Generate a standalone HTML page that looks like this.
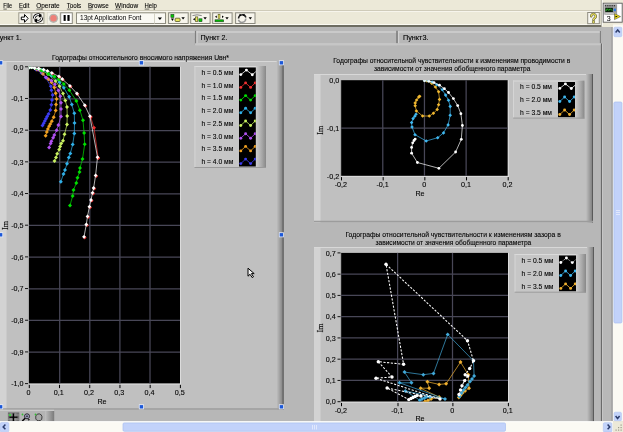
<!DOCTYPE html>
<html><head><meta charset="utf-8"><style>
html,body{margin:0;padding:0;width:623px;height:432px;overflow:hidden;background:#B7B7B7;}
svg{display:block;will-change:transform;font-family:"Liberation Sans",sans-serif;} text{stroke:#000;stroke-width:0.1px;}
</style></head><body>
<svg width="623" height="432" viewBox="0 0 623 432">
<defs>
<linearGradient id="rsh" x1="0" x2="1" y1="0" y2="0"><stop offset="0" stop-color="#C0C0C0"/><stop offset="0.7" stop-color="#8F8F8F"/><stop offset="1" stop-color="#7A7A7A"/></linearGradient>
<linearGradient id="lsh" x1="0" x2="1" y1="0" y2="0"><stop offset="0" stop-color="#CFCFCF"/><stop offset="0.6" stop-color="#A8A8A8"/><stop offset="1" stop-color="#888888"/></linearGradient>
<clipPath id="clipL"><rect x="28.9" y="66.8" width="151.1" height="316.8"/></clipPath>
<clipPath id="clipQ"><rect x="341.1" y="80.2" width="166.7" height="95.7"/></clipPath>
<clipPath id="clipB"><rect x="341.1" y="252.9" width="166.9" height="148.8"/></clipPath>
</defs>
<rect x="0" y="0" width="623" height="27" fill="#ECE9D8" />
<line x1="0" y1="10.5" x2="601" y2="10.5" stroke="#CFCBB9" stroke-width="1" />
<line x1="0" y1="11.5" x2="601" y2="11.5" stroke="#F7F5EC" stroke-width="1" />
<line x1="0" y1="24.5" x2="601.5" y2="24.5" stroke="#FBFAF2" stroke-width="1" />
<rect x="0" y="25" width="601.5" height="2" fill="#6E6D62" />
<text x="3.2" y="8.2" font-size="7.4" fill="#000" text-anchor="start" textLength="9.0" lengthAdjust="spacingAndGlyphs" >File</text>
<line x1="3.4000000000000004" y1="9.1" x2="6.800000000000001" y2="9.1" stroke="#000" stroke-width="0.55" />
<text x="19" y="8.2" font-size="7.4" fill="#000" text-anchor="start" textLength="10.3" lengthAdjust="spacingAndGlyphs" >Edit</text>
<line x1="19.2" y1="9.1" x2="23" y2="9.1" stroke="#000" stroke-width="0.55" />
<text x="36.2" y="8.2" font-size="7.4" fill="#000" text-anchor="start" textLength="23.5" lengthAdjust="spacingAndGlyphs" >Operate</text>
<line x1="36.400000000000006" y1="9.1" x2="41.400000000000006" y2="9.1" stroke="#000" stroke-width="0.55" />
<text x="66.7" y="8.2" font-size="7.4" fill="#000" text-anchor="start" textLength="14.5" lengthAdjust="spacingAndGlyphs" >Tools</text>
<line x1="66.9" y1="9.1" x2="70.9" y2="9.1" stroke="#000" stroke-width="0.55" />
<text x="87.9" y="8.2" font-size="7.4" fill="#000" text-anchor="start" textLength="20.7" lengthAdjust="spacingAndGlyphs" >Browse</text>
<line x1="88.10000000000001" y1="9.1" x2="92.5" y2="9.1" stroke="#000" stroke-width="0.55" />
<text x="115.1" y="8.2" font-size="7.4" fill="#000" text-anchor="start" textLength="23.0" lengthAdjust="spacingAndGlyphs" >Window</text>
<line x1="115.3" y1="9.1" x2="121.5" y2="9.1" stroke="#000" stroke-width="0.55" />
<text x="144.5" y="8.2" font-size="7.4" fill="#000" text-anchor="start" textLength="12.3" lengthAdjust="spacingAndGlyphs" >Help</text>
<line x1="144.7" y1="9.1" x2="149.3" y2="9.1" stroke="#000" stroke-width="0.55" />
<rect x="18.8" y="12.8" width="12.3" height="10.7" fill="#F6F4EC" stroke="#9D9B8C" stroke-width="1"/>
<rect x="31.9" y="12.8" width="12.0" height="10.7" fill="#F6F4EC" stroke="#9D9B8C" stroke-width="1"/>
<path d="M21.3,17.1 h3.2 v-2.6 l3.6,3.9 l-3.6,3.9 v-2.6 h-3.2 z" fill="#fff" stroke="#000" stroke-width="1"/>
<path d="M34.2,18.6 a3.9,3.9 0 0 1 6.6,-2.8" fill="none" stroke="#000" stroke-width="2.6"/>
<path d="M34.2,18.6 a3.9,3.9 0 0 1 6.6,-2.8" fill="none" stroke="#fff" stroke-width="1.1"/>
<path d="M41.9,17.4 a3.9,3.9 0 0 1 -6.6,2.8" fill="none" stroke="#000" stroke-width="2.6"/>
<path d="M41.9,17.4 a3.9,3.9 0 0 1 -6.6,2.8" fill="none" stroke="#fff" stroke-width="1.1"/>
<path d="M39.2,13.6 l3.2,2.6 l-3.6,1.2z M36.9,22.4 l-3.2,-2.6 l3.6,-1.2z" fill="#000"/>
<rect x="47.3" y="12.4" width="12.3" height="11.6" fill="#F3F1E7" stroke="#D8D6CA" stroke-width="0.6"/>
<circle cx="53.5" cy="18.3" r="4.6" fill="#B5B6B0"/>
<circle cx="53.5" cy="18.3" r="3.2" fill="#EE8078"/>
<rect x="60.7" y="12.8" width="11.599999999999994" height="10.7" fill="#FFFFFF" stroke="#8A897E" stroke-width="1"/>
<rect x="63.6" y="15" width="2.1" height="5.9" fill="#000" />
<rect x="67.4" y="15" width="2.2" height="5.9" fill="#000" />
<rect x="76.5" y="12.8" width="89" height="10.7" fill="#FAF9F3" stroke="#8F8D80" stroke-width="1"/>
<line x1="154.5" y1="13" x2="154.5" y2="23.5" stroke="#D5D3C5" stroke-width="1" />
<text x="80" y="20.2" font-size="7.0" fill="#000" text-anchor="start" textLength="61.4" lengthAdjust="spacingAndGlyphs" style="stroke:none">13pt Application Font</text>
<path d="M157.8,17.6 h4.2 l-2.1,2.4 z" fill="#000"/>
<rect x="168.6" y="12.8" width="19.599999999999994" height="10.7" fill="#F7F5EC" stroke="#8A897E" stroke-width="1"/>
<path d="M181.4,17.2 h3.4 l-1.7,2.3 z" fill="#000"/>
<rect x="190.7" y="12.8" width="19.400000000000006" height="10.7" fill="#F7F5EC" stroke="#8A897E" stroke-width="1"/>
<path d="M203.4,17.2 h3.4 l-1.7,2.3 z" fill="#000"/>
<rect x="212.7" y="12.8" width="19.400000000000006" height="10.7" fill="#F7F5EC" stroke="#8A897E" stroke-width="1"/>
<path d="M225.3,17.2 h3.4 l-1.7,2.3 z" fill="#000"/>
<rect x="235.6" y="12.8" width="19.400000000000006" height="10.7" fill="#F7F5EC" stroke="#8A897E" stroke-width="1"/>
<path d="M248.6,17.2 h3.4 l-1.7,2.3 z" fill="#000"/>
<rect x="170.9" y="14.4" width="3" height="3" fill="#00D000" stroke="#204020" stroke-width="0.6"/>
<path d="M170.9,18.6 h3.1 l-1.55,2.4z" fill="#000"/>
<rect x="175.1" y="18.2" width="5" height="3.3" fill="#E8E860" stroke="#404010" stroke-width="0.7" rx="0.8"/>
<path d="M192.5,15.6 q4.6,-1.6 9.2,0" fill="none" stroke="#777" stroke-width="0.9"/>
<path d="M192.9,19.3 l2,-1.3 v2.6z" fill="#000"/>
<rect x="195.5" y="16.9" width="2.3" height="4.6" fill="#E8E860" stroke="#404010" stroke-width="0.6"/>
<rect x="198.9" y="18.8" width="3.1" height="2.9" fill="#00D000" stroke="#204020" stroke-width="0.6"/>
<rect x="215" y="19.8" width="8.6" height="2" fill="#00C000" stroke="#204020" stroke-width="0.6"/>
<rect x="218.1" y="14.2" width="1.9" height="4.4" fill="#E8E860" stroke="#404010" stroke-width="0.5"/>
<path d="M215,16.8 l1.8,-1.3 v2.6z M223.8,16.8 l-1.8,-1.3 v2.6z" fill="#000"/>
<path d="M238.5,18.6 a3.8,3.8 0 0 1 7.4,-1.2" fill="none" stroke="#222" stroke-width="1.5"/>
<path d="M245.8,18.6 a3.8,3.8 0 0 1 -7.4,1.2" fill="none" stroke="#9A9A9A" stroke-width="1.5"/>
<path d="M239.5,13.8 l2.2,1.2 l-2.2,1.4z M244.5,13.8 l-2.2,1.2 l2.2,1.4z" fill="#000"/>
<rect x="587.7" y="12.5" width="11.599999999999909" height="11.2" fill="#F8F7F0" stroke="#8F8D80" stroke-width="1"/>
<path d="M591.2,16.2 a2.3,2.2 0 1 1 3.6,1.8 q-1.3,0.8 -1.3,2" fill="none" stroke="#5A5830" stroke-width="2.4" stroke-linecap="round"/>
<path d="M591.2,16.2 a2.3,2.2 0 1 1 3.6,1.8 q-1.3,0.8 -1.3,2" fill="none" stroke="#F0E860" stroke-width="1.2" stroke-linecap="round"/>
<circle cx="593.5" cy="22" r="1.2" fill="#F0E860" stroke="#5A5830" stroke-width="0.6"/>
<line x1="601.3" y1="0" x2="601.3" y2="26" stroke="#8E8C7E" stroke-width="1" />
<line x1="602.2" y1="0" x2="602.2" y2="26" stroke="#FFFFFF" stroke-width="1" />
<rect x="603.2" y="3.2" width="19" height="19" fill="#FFFFFF" stroke="#5A5A5A" stroke-width="0.9"/>
<rect x="604.3" y="4.3" width="12.8" height="10.4" fill="#9C9C9C" />
<rect x="605.0" y="5.2" width="1.2" height="1.1" fill="#222" />
<rect x="607.2" y="5.2" width="1.2" height="1.1" fill="#222" />
<rect x="609.4" y="5.2" width="1.2" height="1.1" fill="#222" />
<rect x="611.6" y="5.2" width="1.2" height="1.1" fill="#222" />
<rect x="613.8" y="5.2" width="1.2" height="1.1" fill="#222" />
<rect x="605.3" y="7.8" width="7.6" height="4.2" fill="#0A200A" />
<path d="M605.8,11 l1.5,-2.2 l1.5,1.6 l1.5,-1.6 l1.8,1.8" fill="none" stroke="#30E030" stroke-width="0.8"/>
<rect x="613.7" y="8.6" width="2.2" height="2.6" fill="#2A78E0" />
<rect x="605.3" y="12.8" width="10.5" height="1.2" fill="#C8C8C8" />
<text x="608.8" y="20.8" font-size="7" fill="#222" text-anchor="middle" >3</text>
<path d="M614.5,13.6 l6,3 l-6,3z" fill="#F0E010" stroke="#333" stroke-width="0.5"/>
<path d="M615.5,15.8 l2.2,0.8 l-2.2,0.8z" fill="#000"/>
<rect x="0" y="27" width="613" height="394" fill="#B7B7B7" />
<line x1="0" y1="32" x2="195" y2="32" stroke="#CACACA" stroke-width="1.8" />
<text x="-5.5" y="39.9" font-size="6.9" fill="#000" text-anchor="start" textLength="27.2" lengthAdjust="spacingAndGlyphs" >Пункт 1.</text>
<line x1="195" y1="32" x2="397" y2="32" stroke="#CACACA" stroke-width="1.8" />
<line x1="195.6" y1="30.8" x2="195.6" y2="45" stroke="#7E7E7E" stroke-width="1.4" />
<line x1="197" y1="31" x2="197" y2="43.5" stroke="#D2D2D2" stroke-width="1.2" />
<line x1="196" y1="44.2" x2="397" y2="44.2" stroke="#C6C6C6" stroke-width="2" />
<text x="200.5" y="39.9" font-size="6.9" fill="#000" text-anchor="start" textLength="27.0" lengthAdjust="spacingAndGlyphs" >Пункт 2.</text>
<line x1="397" y1="32" x2="600" y2="32" stroke="#CACACA" stroke-width="1.8" />
<line x1="397" y1="30.8" x2="397" y2="43.5" stroke="#7E7E7E" stroke-width="1.6" />
<line x1="398.6" y1="31" x2="398.6" y2="43.5" stroke="#D2D2D2" stroke-width="1.2" />
<line x1="600.4" y1="31" x2="600.4" y2="43.5" stroke="#7A7A7A" stroke-width="1" />
<line x1="195" y1="44.2" x2="601" y2="44.2" stroke="#C6C6C6" stroke-width="2" />
<text x="403" y="39.9" font-size="6.9" fill="#000" text-anchor="start" textLength="25.5" lengthAdjust="spacingAndGlyphs" >Пункт3.</text>
<line x1="601.5" y1="43.5" x2="601.5" y2="421" stroke="#6A6A6A" stroke-width="1.2" />
<line x1="602.6" y1="43.5" x2="602.6" y2="421" stroke="#C8C8C8" stroke-width="1" />
<rect x="603" y="27" width="10" height="394" fill="#B8B8B8" />
<rect x="0" y="61" width="283.6" height="349" fill="#C0C0C0" />
<rect x="0" y="61" width="6.5" height="349" fill="#D3D3D3" />
<line x1="0" y1="61.5" x2="283.6" y2="61.5" stroke="#D8D8D8" stroke-width="1" />
<rect x="276.6" y="61" width="7" height="349" fill="url(#rsh)"/>
<line x1="283.1" y1="61" x2="283.1" y2="410" stroke="#5A5A5A" stroke-width="1" />
<line x1="0" y1="409" x2="283.6" y2="409" stroke="#9C9C9C" stroke-width="1.6" />
<text x="52" y="60.2" font-size="6.9" fill="#000" text-anchor="start" textLength="177" lengthAdjust="spacingAndGlyphs" >Годографы относительного вносимого напряжения Uвн*</text>
<rect x="28.9" y="66.8" width="151.1" height="316.8" fill="#000" />
<line x1="180.5" y1="66.8" x2="180.5" y2="384.6" stroke="#DCDCDC" stroke-width="1" />
<line x1="28.9" y1="384.1" x2="181" y2="384.1" stroke="#DCDCDC" stroke-width="1" />
<line x1="28.4" y1="66.8" x2="28.4" y2="383.6" stroke="#A8A8A8" stroke-width="1" />
<line x1="59.7" y1="66.8" x2="59.7" y2="383.6" stroke="#484757" stroke-width="1.25" />
<line x1="89.80000000000001" y1="66.8" x2="89.80000000000001" y2="383.6" stroke="#484757" stroke-width="1.25" />
<line x1="119.9" y1="66.8" x2="119.9" y2="383.6" stroke="#484757" stroke-width="1.25" />
<line x1="150.0" y1="66.8" x2="150.0" y2="383.6" stroke="#484757" stroke-width="1.25" />
<line x1="28.9" y1="98.85" x2="180" y2="98.85" stroke="#484757" stroke-width="1.25" />
<line x1="28.9" y1="130.5" x2="180" y2="130.5" stroke="#484757" stroke-width="1.25" />
<line x1="28.9" y1="162.14999999999998" x2="180" y2="162.14999999999998" stroke="#484757" stroke-width="1.25" />
<line x1="28.9" y1="193.8" x2="180" y2="193.8" stroke="#484757" stroke-width="1.25" />
<line x1="28.9" y1="225.45" x2="180" y2="225.45" stroke="#484757" stroke-width="1.25" />
<line x1="28.9" y1="257.09999999999997" x2="180" y2="257.09999999999997" stroke="#484757" stroke-width="1.25" />
<line x1="28.9" y1="288.75" x2="180" y2="288.75" stroke="#484757" stroke-width="1.25" />
<line x1="28.9" y1="320.4" x2="180" y2="320.4" stroke="#484757" stroke-width="1.25" />
<line x1="28.9" y1="352.04999999999995" x2="180" y2="352.04999999999995" stroke="#484757" stroke-width="1.25" />
<line x1="25" y1="66.8" x2="28" y2="66.8" stroke="#000" stroke-width="0.9" />
<text x="23.6" y="69.5" font-size="7.2" fill="#000" text-anchor="end" >0,0</text>
<line x1="25" y1="98.47999999999999" x2="28" y2="98.47999999999999" stroke="#000" stroke-width="0.9" />
<text x="23.6" y="101.17999999999999" font-size="7.2" fill="#000" text-anchor="end" >-0,1</text>
<line x1="25" y1="130.16" x2="28" y2="130.16" stroke="#000" stroke-width="0.9" />
<text x="23.6" y="132.85999999999999" font-size="7.2" fill="#000" text-anchor="end" >-0,2</text>
<line x1="25" y1="161.84" x2="28" y2="161.84" stroke="#000" stroke-width="0.9" />
<text x="23.6" y="164.54" font-size="7.2" fill="#000" text-anchor="end" >-0,3</text>
<line x1="25" y1="193.51999999999998" x2="28" y2="193.51999999999998" stroke="#000" stroke-width="0.9" />
<text x="23.6" y="196.21999999999997" font-size="7.2" fill="#000" text-anchor="end" >-0,4</text>
<line x1="25" y1="225.2" x2="28" y2="225.2" stroke="#000" stroke-width="0.9" />
<text x="23.6" y="227.89999999999998" font-size="7.2" fill="#000" text-anchor="end" >-0,5</text>
<line x1="25" y1="256.88" x2="28" y2="256.88" stroke="#000" stroke-width="0.9" />
<text x="23.6" y="259.58" font-size="7.2" fill="#000" text-anchor="end" >-0,6</text>
<line x1="25" y1="288.56" x2="28" y2="288.56" stroke="#000" stroke-width="0.9" />
<text x="23.6" y="291.26" font-size="7.2" fill="#000" text-anchor="end" >-0,7</text>
<line x1="25" y1="320.24" x2="28" y2="320.24" stroke="#000" stroke-width="0.9" />
<text x="23.6" y="322.94" font-size="7.2" fill="#000" text-anchor="end" >-0,8</text>
<line x1="25" y1="351.92" x2="28" y2="351.92" stroke="#000" stroke-width="0.9" />
<text x="23.6" y="354.62" font-size="7.2" fill="#000" text-anchor="end" >-0,9</text>
<line x1="25" y1="383.6" x2="28" y2="383.6" stroke="#000" stroke-width="0.9" />
<text x="23.6" y="386.3" font-size="7.2" fill="#000" text-anchor="end" >-1,0</text>
<line x1="29.299999999999997" y1="384.8" x2="29.299999999999997" y2="388.1" stroke="#000" stroke-width="1" />
<text x="28.599999999999998" y="394.8" font-size="7.2" fill="#000" text-anchor="middle" >0</text>
<line x1="59.519999999999996" y1="384.8" x2="59.519999999999996" y2="388.1" stroke="#000" stroke-width="1" />
<text x="58.82" y="394.8" font-size="7.2" fill="#000" text-anchor="middle" >0,1</text>
<line x1="89.74000000000001" y1="384.8" x2="89.74000000000001" y2="388.1" stroke="#000" stroke-width="1" />
<text x="89.04" y="394.8" font-size="7.2" fill="#000" text-anchor="middle" >0,2</text>
<line x1="119.96000000000001" y1="384.8" x2="119.96000000000001" y2="388.1" stroke="#000" stroke-width="1" />
<text x="119.26" y="394.8" font-size="7.2" fill="#000" text-anchor="middle" >0,3</text>
<line x1="150.18" y1="384.8" x2="150.18" y2="388.1" stroke="#000" stroke-width="1" />
<text x="149.48" y="394.8" font-size="7.2" fill="#000" text-anchor="middle" >0,4</text>
<line x1="180.4" y1="384.8" x2="180.4" y2="388.1" stroke="#000" stroke-width="1" />
<text x="179.7" y="394.8" font-size="7.2" fill="#000" text-anchor="middle" >0,5</text>
<text x="102" y="403.8" font-size="7.2" fill="#000" text-anchor="middle" >Re</text>
<text x="0" y="0" font-size="8" text-anchor="middle" style="font-family:'Liberation Serif',serif;stroke-width:0.15px" transform="translate(8.2,225.6) rotate(-90)">Im</text>
<rect x="-1.9" y="60.3" width="5" height="5" fill="#E4EAF8" />
<rect x="-1.1" y="61.099999999999994" width="3.4" height="3.4" fill="#1C58D8" />
<rect x="138.9" y="60.3" width="5" height="5" fill="#E4EAF8" />
<rect x="139.70000000000002" y="61.099999999999994" width="3.4" height="3.4" fill="#1C58D8" />
<rect x="278.9" y="60.3" width="5" height="5" fill="#E4EAF8" />
<rect x="279.7" y="61.099999999999994" width="3.4" height="3.4" fill="#1C58D8" />
<rect x="-1.9" y="232.3" width="5" height="5" fill="#E4EAF8" />
<rect x="-1.1" y="233.10000000000002" width="3.4" height="3.4" fill="#1C58D8" />
<rect x="-1.9" y="404.3" width="5" height="5" fill="#E4EAF8" />
<rect x="-1.1" y="405.1" width="3.4" height="3.4" fill="#1C58D8" />
<rect x="138.9" y="404.3" width="5" height="5" fill="#E4EAF8" />
<rect x="139.70000000000002" y="405.1" width="3.4" height="3.4" fill="#1C58D8" />
<rect x="278.9" y="404.3" width="5" height="5" fill="#E4EAF8" />
<rect x="279.7" y="405.1" width="3.4" height="3.4" fill="#1C58D8" />
<rect x="278.9" y="232.3" width="5" height="5" fill="#E4EAF8" />
<rect x="279.7" y="233.10000000000002" width="3.4" height="3.4" fill="#1C58D8" />
<g clip-path="url(#clipL)">
<path d="M29.5,67.3 L36.0,69.5 L41.5,73.0 L45.6,77.6 L50.8,86.3 L51.4,90.3 L52.6,94.9 L52.0,100.0 L51.4,104.8 L50.3,110.0 L48.5,114.0 L47.1,116.4 L46.0,118.7 L44.8,121.0 L43.7,123.3 L42.5,125.6" fill="none" stroke="#3C3CF0" stroke-width="0.7"/>
<path d="M29.5,65.3 l2.0,2.0 l-2.0,2.0 l-2.0,-2.0z" fill="#3C3CF0"/>
<path d="M36.0,67.5 l2.0,2.0 l-2.0,2.0 l-2.0,-2.0z" fill="#3C3CF0"/>
<path d="M41.5,71.0 l2.0,2.0 l-2.0,2.0 l-2.0,-2.0z" fill="#3C3CF0"/>
<path d="M45.6,75.6 l2.0,2.0 l-2.0,2.0 l-2.0,-2.0z" fill="#3C3CF0"/>
<path d="M50.8,84.3 l2.0,2.0 l-2.0,2.0 l-2.0,-2.0z" fill="#3C3CF0"/>
<path d="M51.4,88.3 l2.0,2.0 l-2.0,2.0 l-2.0,-2.0z" fill="#3C3CF0"/>
<path d="M52.6,92.9 l2.0,2.0 l-2.0,2.0 l-2.0,-2.0z" fill="#3C3CF0"/>
<path d="M52.0,98.0 l2.0,2.0 l-2.0,2.0 l-2.0,-2.0z" fill="#3C3CF0"/>
<path d="M51.4,102.8 l2.0,2.0 l-2.0,2.0 l-2.0,-2.0z" fill="#3C3CF0"/>
<path d="M50.3,108.0 l2.0,2.0 l-2.0,2.0 l-2.0,-2.0z" fill="#3C3CF0"/>
<path d="M48.5,112.0 l2.0,2.0 l-2.0,2.0 l-2.0,-2.0z" fill="#3C3CF0"/>
<path d="M47.1,114.4 l2.0,2.0 l-2.0,2.0 l-2.0,-2.0z" fill="#3C3CF0"/>
<path d="M46.0,116.7 l2.0,2.0 l-2.0,2.0 l-2.0,-2.0z" fill="#3C3CF0"/>
<path d="M44.8,119.0 l2.0,2.0 l-2.0,2.0 l-2.0,-2.0z" fill="#3C3CF0"/>
<path d="M43.7,121.3 l2.0,2.0 l-2.0,2.0 l-2.0,-2.0z" fill="#3C3CF0"/>
<path d="M42.5,123.6 l2.0,2.0 l-2.0,2.0 l-2.0,-2.0z" fill="#3C3CF0"/>
<path d="M29.5,67.3 L37.0,69.5 L43.0,74.0 L48.5,79.3 L51.4,82.2 L54.3,87.4 L55.7,93.2 L56.6,99.0 L56.0,104.5 L55.7,110.5 L53.7,117.2 L51.8,121.3 L50.3,123.9 L49.1,126.2 L47.9,129.1 L46.8,132.0 L45.6,135.7" fill="none" stroke="#F0A020" stroke-width="0.7"/>
<path d="M29.5,65.3 l2.0,2.0 l-2.0,2.0 l-2.0,-2.0z" fill="#F0A020"/>
<path d="M37.0,67.5 l2.0,2.0 l-2.0,2.0 l-2.0,-2.0z" fill="#F0A020"/>
<path d="M43.0,72.0 l2.0,2.0 l-2.0,2.0 l-2.0,-2.0z" fill="#F0A020"/>
<path d="M48.5,77.3 l2.0,2.0 l-2.0,2.0 l-2.0,-2.0z" fill="#F0A020"/>
<path d="M51.4,80.2 l2.0,2.0 l-2.0,2.0 l-2.0,-2.0z" fill="#F0A020"/>
<path d="M54.3,85.4 l2.0,2.0 l-2.0,2.0 l-2.0,-2.0z" fill="#F0A020"/>
<path d="M55.7,91.2 l2.0,2.0 l-2.0,2.0 l-2.0,-2.0z" fill="#F0A020"/>
<path d="M56.6,97.0 l2.0,2.0 l-2.0,2.0 l-2.0,-2.0z" fill="#F0A020"/>
<path d="M56.0,102.5 l2.0,2.0 l-2.0,2.0 l-2.0,-2.0z" fill="#F0A020"/>
<path d="M55.7,108.5 l2.0,2.0 l-2.0,2.0 l-2.0,-2.0z" fill="#F0A020"/>
<path d="M53.7,115.2 l2.0,2.0 l-2.0,2.0 l-2.0,-2.0z" fill="#F0A020"/>
<path d="M51.8,119.3 l2.0,2.0 l-2.0,2.0 l-2.0,-2.0z" fill="#F0A020"/>
<path d="M50.3,121.9 l2.0,2.0 l-2.0,2.0 l-2.0,-2.0z" fill="#F0A020"/>
<path d="M49.1,124.2 l2.0,2.0 l-2.0,2.0 l-2.0,-2.0z" fill="#F0A020"/>
<path d="M47.9,127.1 l2.0,2.0 l-2.0,2.0 l-2.0,-2.0z" fill="#F0A020"/>
<path d="M46.8,130.0 l2.0,2.0 l-2.0,2.0 l-2.0,-2.0z" fill="#F0A020"/>
<path d="M45.6,133.7 l2.0,2.0 l-2.0,2.0 l-2.0,-2.0z" fill="#F0A020"/>
<path d="M29.5,67.3 L38.0,69.5 L46.2,77.6 L51.4,80.5 L54.9,84.3 L58.4,90.5 L60.3,96.3 L61.0,102.8 L61.0,109.0 L61.0,116.4 L58.4,125.0 L56.6,130.3 L54.3,134.9 L53.1,137.8 L51.4,141.2 L50.6,143.6 L49.1,147.6" fill="none" stroke="#B050F0" stroke-width="0.7"/>
<path d="M29.5,65.3 l2.0,2.0 l-2.0,2.0 l-2.0,-2.0z" fill="#B050F0"/>
<path d="M38.0,67.5 l2.0,2.0 l-2.0,2.0 l-2.0,-2.0z" fill="#B050F0"/>
<path d="M46.2,75.6 l2.0,2.0 l-2.0,2.0 l-2.0,-2.0z" fill="#B050F0"/>
<path d="M51.4,78.5 l2.0,2.0 l-2.0,2.0 l-2.0,-2.0z" fill="#B050F0"/>
<path d="M54.9,82.3 l2.0,2.0 l-2.0,2.0 l-2.0,-2.0z" fill="#B050F0"/>
<path d="M58.4,88.5 l2.0,2.0 l-2.0,2.0 l-2.0,-2.0z" fill="#B050F0"/>
<path d="M60.3,94.3 l2.0,2.0 l-2.0,2.0 l-2.0,-2.0z" fill="#B050F0"/>
<path d="M61.0,100.8 l2.0,2.0 l-2.0,2.0 l-2.0,-2.0z" fill="#B050F0"/>
<path d="M61.0,107.0 l2.0,2.0 l-2.0,2.0 l-2.0,-2.0z" fill="#B050F0"/>
<path d="M61.0,114.4 l2.0,2.0 l-2.0,2.0 l-2.0,-2.0z" fill="#B050F0"/>
<path d="M58.4,123.0 l2.0,2.0 l-2.0,2.0 l-2.0,-2.0z" fill="#B050F0"/>
<path d="M56.6,128.3 l2.0,2.0 l-2.0,2.0 l-2.0,-2.0z" fill="#B050F0"/>
<path d="M54.3,132.9 l2.0,2.0 l-2.0,2.0 l-2.0,-2.0z" fill="#B050F0"/>
<path d="M53.1,135.8 l2.0,2.0 l-2.0,2.0 l-2.0,-2.0z" fill="#B050F0"/>
<path d="M51.4,139.2 l2.0,2.0 l-2.0,2.0 l-2.0,-2.0z" fill="#B050F0"/>
<path d="M50.6,141.6 l2.0,2.0 l-2.0,2.0 l-2.0,-2.0z" fill="#B050F0"/>
<path d="M49.1,145.6 l2.0,2.0 l-2.0,2.0 l-2.0,-2.0z" fill="#B050F0"/>
<path d="M29.5,67.3 L40.0,69.5 L48.0,74.0 L55.5,81.0 L59.5,86.3 L63.0,93.5 L65.3,100.5 L67.0,107.0 L67.2,116.0 L67.0,124.5 L64.5,134.3 L63.0,140.7 L61.2,143.6 L60.1,146.5 L59.2,149.4 L57.2,153.8 L56.0,157.5 L54.5,161.0" fill="none" stroke="#C8F060" stroke-width="0.7"/>
<path d="M29.5,65.3 l2.0,2.0 l-2.0,2.0 l-2.0,-2.0z" fill="#C8F060"/>
<path d="M40.0,67.5 l2.0,2.0 l-2.0,2.0 l-2.0,-2.0z" fill="#C8F060"/>
<path d="M48.0,72.0 l2.0,2.0 l-2.0,2.0 l-2.0,-2.0z" fill="#C8F060"/>
<path d="M55.5,79.0 l2.0,2.0 l-2.0,2.0 l-2.0,-2.0z" fill="#C8F060"/>
<path d="M59.5,84.3 l2.0,2.0 l-2.0,2.0 l-2.0,-2.0z" fill="#C8F060"/>
<path d="M63.0,91.5 l2.0,2.0 l-2.0,2.0 l-2.0,-2.0z" fill="#C8F060"/>
<path d="M65.3,98.5 l2.0,2.0 l-2.0,2.0 l-2.0,-2.0z" fill="#C8F060"/>
<path d="M67.0,105.0 l2.0,2.0 l-2.0,2.0 l-2.0,-2.0z" fill="#C8F060"/>
<path d="M67.2,114.0 l2.0,2.0 l-2.0,2.0 l-2.0,-2.0z" fill="#C8F060"/>
<path d="M67.0,122.5 l2.0,2.0 l-2.0,2.0 l-2.0,-2.0z" fill="#C8F060"/>
<path d="M64.5,132.3 l2.0,2.0 l-2.0,2.0 l-2.0,-2.0z" fill="#C8F060"/>
<path d="M63.0,138.7 l2.0,2.0 l-2.0,2.0 l-2.0,-2.0z" fill="#C8F060"/>
<path d="M61.2,141.6 l2.0,2.0 l-2.0,2.0 l-2.0,-2.0z" fill="#C8F060"/>
<path d="M60.1,144.5 l2.0,2.0 l-2.0,2.0 l-2.0,-2.0z" fill="#C8F060"/>
<path d="M59.2,147.4 l2.0,2.0 l-2.0,2.0 l-2.0,-2.0z" fill="#C8F060"/>
<path d="M57.2,151.8 l2.0,2.0 l-2.0,2.0 l-2.0,-2.0z" fill="#C8F060"/>
<path d="M56.0,155.5 l2.0,2.0 l-2.0,2.0 l-2.0,-2.0z" fill="#C8F060"/>
<path d="M54.5,159.0 l2.0,2.0 l-2.0,2.0 l-2.0,-2.0z" fill="#C8F060"/>
<path d="M29.5,67.3 L42.0,70.0 L51.4,75.8 L59.5,82.2 L63.8,87.8 L69.1,96.7 L71.8,104.6 L74.3,113.3 L74.5,123.0 L74.3,133.6 L72.7,144.6 L70.3,153.4 L68.8,157.5 L67.0,163.8 L65.0,170.0 L63.5,174.0 L60.8,181.7" fill="none" stroke="#30B0E8" stroke-width="0.7"/>
<path d="M29.5,65.3 l2.0,2.0 l-2.0,2.0 l-2.0,-2.0z" fill="#30B0E8"/>
<path d="M42.0,68.0 l2.0,2.0 l-2.0,2.0 l-2.0,-2.0z" fill="#30B0E8"/>
<path d="M51.4,73.8 l2.0,2.0 l-2.0,2.0 l-2.0,-2.0z" fill="#30B0E8"/>
<path d="M59.5,80.2 l2.0,2.0 l-2.0,2.0 l-2.0,-2.0z" fill="#30B0E8"/>
<path d="M63.8,85.8 l2.0,2.0 l-2.0,2.0 l-2.0,-2.0z" fill="#30B0E8"/>
<path d="M69.1,94.7 l2.0,2.0 l-2.0,2.0 l-2.0,-2.0z" fill="#30B0E8"/>
<path d="M71.8,102.6 l2.0,2.0 l-2.0,2.0 l-2.0,-2.0z" fill="#30B0E8"/>
<path d="M74.3,111.3 l2.0,2.0 l-2.0,2.0 l-2.0,-2.0z" fill="#30B0E8"/>
<path d="M74.5,121.0 l2.0,2.0 l-2.0,2.0 l-2.0,-2.0z" fill="#30B0E8"/>
<path d="M74.3,131.6 l2.0,2.0 l-2.0,2.0 l-2.0,-2.0z" fill="#30B0E8"/>
<path d="M72.7,142.6 l2.0,2.0 l-2.0,2.0 l-2.0,-2.0z" fill="#30B0E8"/>
<path d="M70.3,151.4 l2.0,2.0 l-2.0,2.0 l-2.0,-2.0z" fill="#30B0E8"/>
<path d="M68.8,155.5 l2.0,2.0 l-2.0,2.0 l-2.0,-2.0z" fill="#30B0E8"/>
<path d="M67.0,161.8 l2.0,2.0 l-2.0,2.0 l-2.0,-2.0z" fill="#30B0E8"/>
<path d="M65.0,168.0 l2.0,2.0 l-2.0,2.0 l-2.0,-2.0z" fill="#30B0E8"/>
<path d="M63.5,172.0 l2.0,2.0 l-2.0,2.0 l-2.0,-2.0z" fill="#30B0E8"/>
<path d="M60.8,179.7 l2.0,2.0 l-2.0,2.0 l-2.0,-2.0z" fill="#30B0E8"/>
<path d="M29.5,67.3 L41.6,70.4 L48.5,73.9 L54.3,76.6 L58.9,79.5 L63.8,84.0 L69.4,90.3 L76.4,101.0 L79.9,110.2 L83.0,120.3 L84.1,133.0 L84.7,144.3 L82.5,159.0 L80.0,168.0 L79.5,172.0 L77.5,177.7 L76.3,183.0 L73.5,190.0 L72.6,196.0 L70.0,205.5" fill="none" stroke="#00E000" stroke-width="0.7"/>
<path d="M29.5,65.3 l2.0,2.0 l-2.0,2.0 l-2.0,-2.0z" fill="#00E000"/>
<path d="M41.6,68.4 l2.0,2.0 l-2.0,2.0 l-2.0,-2.0z" fill="#00E000"/>
<path d="M48.5,71.9 l2.0,2.0 l-2.0,2.0 l-2.0,-2.0z" fill="#00E000"/>
<path d="M54.3,74.6 l2.0,2.0 l-2.0,2.0 l-2.0,-2.0z" fill="#00E000"/>
<path d="M58.9,77.5 l2.0,2.0 l-2.0,2.0 l-2.0,-2.0z" fill="#00E000"/>
<path d="M63.8,82.0 l2.0,2.0 l-2.0,2.0 l-2.0,-2.0z" fill="#00E000"/>
<path d="M69.4,88.3 l2.0,2.0 l-2.0,2.0 l-2.0,-2.0z" fill="#00E000"/>
<path d="M76.4,99.0 l2.0,2.0 l-2.0,2.0 l-2.0,-2.0z" fill="#00E000"/>
<path d="M79.9,108.2 l2.0,2.0 l-2.0,2.0 l-2.0,-2.0z" fill="#00E000"/>
<path d="M83.0,118.3 l2.0,2.0 l-2.0,2.0 l-2.0,-2.0z" fill="#00E000"/>
<path d="M84.1,131.0 l2.0,2.0 l-2.0,2.0 l-2.0,-2.0z" fill="#00E000"/>
<path d="M84.7,142.3 l2.0,2.0 l-2.0,2.0 l-2.0,-2.0z" fill="#00E000"/>
<path d="M82.5,157.0 l2.0,2.0 l-2.0,2.0 l-2.0,-2.0z" fill="#00E000"/>
<path d="M80.0,166.0 l2.0,2.0 l-2.0,2.0 l-2.0,-2.0z" fill="#00E000"/>
<path d="M79.5,170.0 l2.0,2.0 l-2.0,2.0 l-2.0,-2.0z" fill="#00E000"/>
<path d="M77.5,175.7 l2.0,2.0 l-2.0,2.0 l-2.0,-2.0z" fill="#00E000"/>
<path d="M76.3,181.0 l2.0,2.0 l-2.0,2.0 l-2.0,-2.0z" fill="#00E000"/>
<path d="M73.5,188.0 l2.0,2.0 l-2.0,2.0 l-2.0,-2.0z" fill="#00E000"/>
<path d="M72.6,194.0 l2.0,2.0 l-2.0,2.0 l-2.0,-2.0z" fill="#00E000"/>
<path d="M70.0,203.5 l2.0,2.0 l-2.0,2.0 l-2.0,-2.0z" fill="#00E000"/>
<path d="M90.6,116.9 L94.0,127.8 L98.2,157.9" fill="none" stroke="#F03030" stroke-width="0.7"/>
<path d="M90.6,114.9 l2.0,2.0 l-2.0,2.0 l-2.0,-2.0z" fill="#F03030"/>
<path d="M94.0,125.8 l2.0,2.0 l-2.0,2.0 l-2.0,-2.0z" fill="#F03030"/>
<path d="M98.2,155.9 l2.0,2.0 l-2.0,2.0 l-2.0,-2.0z" fill="#F03030"/>
<path d="M52.5,71.7 l1.9,1.9 l-1.9,1.9 l-1.9,-1.9z" fill="#E83030"/>
<path d="M59.6,75.2 l1.9,1.9 l-1.9,1.9 l-1.9,-1.9z" fill="#E83030"/>
<path d="M62.9,77.8 l1.9,1.9 l-1.9,1.9 l-1.9,-1.9z" fill="#E83030"/>
<path d="M70.6,84.7 l1.9,1.9 l-1.9,1.9 l-1.9,-1.9z" fill="#E83030"/>
<path d="M77.6,92.3 l1.9,1.9 l-1.9,1.9 l-1.9,-1.9z" fill="#E83030"/>
<path d="M85.4,104.0 l1.9,1.9 l-1.9,1.9 l-1.9,-1.9z" fill="#E83030"/>
<path d="M90.6,115.0 l1.9,1.9 l-1.9,1.9 l-1.9,-1.9z" fill="#E83030"/>
<path d="M98.2,156.0 l1.9,1.9 l-1.9,1.9 l-1.9,-1.9z" fill="#E83030"/>
<path d="M96.3,174.2 l1.9,1.9 l-1.9,1.9 l-1.9,-1.9z" fill="#E83030"/>
<path d="M94.3,186.8 l1.9,1.9 l-1.9,1.9 l-1.9,-1.9z" fill="#E83030"/>
<path d="M93.2,191.6 l1.9,1.9 l-1.9,1.9 l-1.9,-1.9z" fill="#E83030"/>
<path d="M91.7,198.8 l1.9,1.9 l-1.9,1.9 l-1.9,-1.9z" fill="#E83030"/>
<path d="M90.1,205.5 l1.9,1.9 l-1.9,1.9 l-1.9,-1.9z" fill="#E83030"/>
<path d="M88.2,215.2 l1.9,1.9 l-1.9,1.9 l-1.9,-1.9z" fill="#E83030"/>
<path d="M87.0,223.3 l1.9,1.9 l-1.9,1.9 l-1.9,-1.9z" fill="#E83030"/>
<path d="M84.7,235.6 l1.9,1.9 l-1.9,1.9 l-1.9,-1.9z" fill="#E83030"/>
<path d="M29.5,67.3 L31.7,67.4 L34.6,68.0 L38.7,68.5 L43.7,69.7 L47.4,70.9 L51.8,72.9 L58.9,76.4 L62.2,79.0 L69.9,85.9 L76.9,93.5 L84.7,105.2 L89.9,116.2 L97.5,157.2 L95.6,175.4 L93.6,188.0 L92.5,192.8 L91.0,200.0 L89.4,206.7 L87.5,216.4 L86.3,224.5 L84.0,236.8" fill="none" stroke="#FFFFFF" stroke-width="0.7"/>
<path d="M29.5,65.4 l1.9,1.9 l-1.9,1.9 l-1.9,-1.9z" fill="#FFFFFF"/>
<path d="M31.7,65.5 l1.9,1.9 l-1.9,1.9 l-1.9,-1.9z" fill="#FFFFFF"/>
<path d="M34.6,66.1 l1.9,1.9 l-1.9,1.9 l-1.9,-1.9z" fill="#FFFFFF"/>
<path d="M38.7,66.6 l1.9,1.9 l-1.9,1.9 l-1.9,-1.9z" fill="#FFFFFF"/>
<path d="M43.7,67.8 l1.9,1.9 l-1.9,1.9 l-1.9,-1.9z" fill="#FFFFFF"/>
<path d="M47.4,69.0 l1.9,1.9 l-1.9,1.9 l-1.9,-1.9z" fill="#FFFFFF"/>
<path d="M51.8,71.0 l1.9,1.9 l-1.9,1.9 l-1.9,-1.9z" fill="#FFFFFF"/>
<path d="M58.9,74.5 l1.9,1.9 l-1.9,1.9 l-1.9,-1.9z" fill="#FFFFFF"/>
<path d="M62.2,77.1 l1.9,1.9 l-1.9,1.9 l-1.9,-1.9z" fill="#FFFFFF"/>
<path d="M69.9,84.0 l1.9,1.9 l-1.9,1.9 l-1.9,-1.9z" fill="#FFFFFF"/>
<path d="M76.9,91.6 l1.9,1.9 l-1.9,1.9 l-1.9,-1.9z" fill="#FFFFFF"/>
<path d="M84.7,103.3 l1.9,1.9 l-1.9,1.9 l-1.9,-1.9z" fill="#FFFFFF"/>
<path d="M89.9,114.3 l1.9,1.9 l-1.9,1.9 l-1.9,-1.9z" fill="#FFFFFF"/>
<path d="M97.5,155.3 l1.9,1.9 l-1.9,1.9 l-1.9,-1.9z" fill="#FFFFFF"/>
<path d="M95.6,173.5 l1.9,1.9 l-1.9,1.9 l-1.9,-1.9z" fill="#FFFFFF"/>
<path d="M93.6,186.1 l1.9,1.9 l-1.9,1.9 l-1.9,-1.9z" fill="#FFFFFF"/>
<path d="M92.5,190.9 l1.9,1.9 l-1.9,1.9 l-1.9,-1.9z" fill="#FFFFFF"/>
<path d="M91.0,198.1 l1.9,1.9 l-1.9,1.9 l-1.9,-1.9z" fill="#FFFFFF"/>
<path d="M89.4,204.8 l1.9,1.9 l-1.9,1.9 l-1.9,-1.9z" fill="#FFFFFF"/>
<path d="M87.5,214.5 l1.9,1.9 l-1.9,1.9 l-1.9,-1.9z" fill="#FFFFFF"/>
<path d="M86.3,222.6 l1.9,1.9 l-1.9,1.9 l-1.9,-1.9z" fill="#FFFFFF"/>
<path d="M84.0,234.9 l1.9,1.9 l-1.9,1.9 l-1.9,-1.9z" fill="#FFFFFF"/>
</g>
<rect x="194.4" y="66" width="71.6" height="102" fill="#C6C6C6" />
<line x1="194.4" y1="66.5" x2="266" y2="66.5" stroke="#DADADA" stroke-width="1" />
<line x1="194.9" y1="66" x2="194.9" y2="168" stroke="#D5D5D5" stroke-width="1" />
<rect x="255.8" y="66" width="10.199999999999989" height="102" fill="url(#lsh)"/>
<line x1="194.4" y1="167.5" x2="266" y2="167.5" stroke="#9A9A9A" stroke-width="1" />
<rect x="239" y="67.5" width="16.80000000000001" height="99" fill="#000" />
<clipPath id="lg1"><rect x="239" y="67.5" width="16.80000000000001" height="99"/></clipPath>
<text x="201.4" y="75.0" font-size="7.2" fill="#000" text-anchor="start" textLength="32.0" lengthAdjust="spacingAndGlyphs" >h = 0.5 мм</text>
<g clip-path="url(#lg1)"><path d="M240.8,74.6 L246.4,70.1 L252.3,74.7 L257.5,70.2" fill="none" stroke="#FFFFFF" stroke-width="0.8"/>
<circle cx="240.8" cy="74.6" r="1.45" fill="#FFFFFF"/>
<circle cx="246.4" cy="70.1" r="1.45" fill="#FFFFFF"/>
<circle cx="252.3" cy="74.7" r="1.45" fill="#FFFFFF"/>
<circle cx="257.5" cy="70.2" r="1.45" fill="#FFFFFF"/>
</g>
<text x="201.4" y="87.7" font-size="7.2" fill="#000" text-anchor="start" textLength="32.0" lengthAdjust="spacingAndGlyphs" >h = 1.0 мм</text>
<g clip-path="url(#lg1)"><path d="M240.8,87.4 L245.6,82.9 L250.6,87.4 L255.2,82.9" fill="none" stroke="#F03030" stroke-width="0.8"/>
<circle cx="240.8" cy="87.4" r="1.45" fill="#F03030"/>
<circle cx="245.6" cy="82.9" r="1.45" fill="#F03030"/>
<circle cx="250.6" cy="87.4" r="1.45" fill="#F03030"/>
<circle cx="255.2" cy="82.9" r="1.45" fill="#F03030"/>
</g>
<text x="201.4" y="100.4" font-size="7.2" fill="#000" text-anchor="start" textLength="32.0" lengthAdjust="spacingAndGlyphs" >h = 1.5 мм</text>
<g clip-path="url(#lg1)"><path d="M240.8,100.1 L245.6,95.6 L250.6,100.1 L255.2,95.6" fill="none" stroke="#00E000" stroke-width="0.8"/>
<circle cx="240.8" cy="100.1" r="1.45" fill="#00E000"/>
<circle cx="245.6" cy="95.6" r="1.45" fill="#00E000"/>
<circle cx="250.6" cy="100.1" r="1.45" fill="#00E000"/>
<circle cx="255.2" cy="95.6" r="1.45" fill="#00E000"/>
</g>
<text x="201.4" y="113.1" font-size="7.2" fill="#000" text-anchor="start" textLength="32.0" lengthAdjust="spacingAndGlyphs" >h = 2.0 мм</text>
<g clip-path="url(#lg1)"><path d="M240.8,112.8 L245.6,108.3 L250.6,112.8 L255.2,108.3" fill="none" stroke="#30B0E8" stroke-width="0.8"/>
<circle cx="240.8" cy="112.8" r="1.45" fill="#30B0E8"/>
<circle cx="245.6" cy="108.3" r="1.45" fill="#30B0E8"/>
<circle cx="250.6" cy="112.8" r="1.45" fill="#30B0E8"/>
<circle cx="255.2" cy="108.3" r="1.45" fill="#30B0E8"/>
</g>
<text x="201.4" y="125.8" font-size="7.2" fill="#000" text-anchor="start" textLength="32.0" lengthAdjust="spacingAndGlyphs" >h = 2.5 мм</text>
<g clip-path="url(#lg1)"><path d="M240.8,125.5 L245.6,121.0 L250.6,125.5 L255.2,121.0" fill="none" stroke="#C8F060" stroke-width="0.8"/>
<circle cx="240.8" cy="125.5" r="1.45" fill="#C8F060"/>
<circle cx="245.6" cy="121.0" r="1.45" fill="#C8F060"/>
<circle cx="250.6" cy="125.5" r="1.45" fill="#C8F060"/>
<circle cx="255.2" cy="121.0" r="1.45" fill="#C8F060"/>
</g>
<text x="201.4" y="138.5" font-size="7.2" fill="#000" text-anchor="start" textLength="32.0" lengthAdjust="spacingAndGlyphs" >h = 3.0 мм</text>
<g clip-path="url(#lg1)"><path d="M240.8,138.2 L245.6,133.7 L250.6,138.2 L255.2,133.7" fill="none" stroke="#B050F0" stroke-width="0.8"/>
<circle cx="240.8" cy="138.2" r="1.45" fill="#B050F0"/>
<circle cx="245.6" cy="133.7" r="1.45" fill="#B050F0"/>
<circle cx="250.6" cy="138.2" r="1.45" fill="#B050F0"/>
<circle cx="255.2" cy="133.7" r="1.45" fill="#B050F0"/>
</g>
<text x="201.4" y="151.2" font-size="7.2" fill="#000" text-anchor="start" textLength="32.0" lengthAdjust="spacingAndGlyphs" >h = 3.5 мм</text>
<g clip-path="url(#lg1)"><path d="M240.8,150.9 L245.6,146.4 L250.6,150.9 L255.2,146.4" fill="none" stroke="#F0A020" stroke-width="0.8"/>
<circle cx="240.8" cy="150.9" r="1.45" fill="#F0A020"/>
<circle cx="245.6" cy="146.4" r="1.45" fill="#F0A020"/>
<circle cx="250.6" cy="150.9" r="1.45" fill="#F0A020"/>
<circle cx="255.2" cy="146.4" r="1.45" fill="#F0A020"/>
</g>
<text x="201.4" y="163.9" font-size="7.2" fill="#000" text-anchor="start" textLength="32.0" lengthAdjust="spacingAndGlyphs" >h = 4.0 мм</text>
<g clip-path="url(#lg1)"><path d="M240.8,163.6 L245.6,159.1 L250.6,163.6 L255.2,159.1" fill="none" stroke="#3C3CF0" stroke-width="0.8"/>
<circle cx="240.8" cy="163.6" r="1.45" fill="#3C3CF0"/>
<circle cx="245.6" cy="159.1" r="1.45" fill="#3C3CF0"/>
<circle cx="250.6" cy="163.6" r="1.45" fill="#3C3CF0"/>
<circle cx="255.2" cy="159.1" r="1.45" fill="#3C3CF0"/>
</g>
<rect x="314" y="74" width="279" height="148.5" fill="#C0C0C0" />
<rect x="314" y="74" width="6.5" height="148.5" fill="#D3D3D3" />
<line x1="314" y1="74.5" x2="593" y2="74.5" stroke="#D8D8D8" stroke-width="1" />
<rect x="586" y="74" width="7" height="148.5" fill="url(#rsh)"/>
<line x1="592.5" y1="74" x2="592.5" y2="222.5" stroke="#5A5A5A" stroke-width="1" />
<line x1="314" y1="221.5" x2="593" y2="221.5" stroke="#9C9C9C" stroke-width="1.6" />
<text x="333.2" y="63.2" font-size="6.9" fill="#000" text-anchor="start" textLength="237.1" lengthAdjust="spacingAndGlyphs" >Годографы относительной чувствительности к изменениям проводимости в</text>
<text x="374" y="71" font-size="6.9" fill="#000" text-anchor="start" textLength="156.5" lengthAdjust="spacingAndGlyphs" >зависимости от значения обобщенного параметра</text>
<rect x="341.1" y="80.2" width="166.7" height="95.7" fill="#000" />
<line x1="508.3" y1="80.2" x2="508.3" y2="176.9" stroke="#DCDCDC" stroke-width="1" />
<line x1="341.1" y1="176.4" x2="508.8" y2="176.4" stroke="#DCDCDC" stroke-width="1" />
<line x1="340.6" y1="80.2" x2="340.6" y2="175.9" stroke="#A8A8A8" stroke-width="1" />
<line x1="382.77500000000003" y1="80.2" x2="382.77500000000003" y2="175.9" stroke="#484757" stroke-width="1.25" />
<line x1="424.45000000000005" y1="80.2" x2="424.45000000000005" y2="175.9" stroke="#484757" stroke-width="1.25" />
<line x1="466.125" y1="80.2" x2="466.125" y2="175.9" stroke="#484757" stroke-width="1.25" />
<line x1="341.1" y1="128.05" x2="507.8" y2="128.05" stroke="#484757" stroke-width="1.25" />
<text x="339.2" y="82.9" font-size="7.2" fill="#000" text-anchor="end" >0,0</text>
<text x="339.2" y="130.75" font-size="7.2" fill="#000" text-anchor="end" >-0,1</text>
<text x="339.2" y="178.6" font-size="7.2" fill="#000" text-anchor="end" >-0,2</text>
<line x1="341.5" y1="177.1" x2="341.5" y2="180.4" stroke="#000" stroke-width="1" />
<text x="340.90000000000003" y="187.1" font-size="7.2" fill="#000" text-anchor="middle" >-0,2</text>
<line x1="383.175" y1="177.1" x2="383.175" y2="180.4" stroke="#000" stroke-width="1" />
<text x="382.57500000000005" y="187.1" font-size="7.2" fill="#000" text-anchor="middle" >-0,1</text>
<line x1="424.85" y1="177.1" x2="424.85" y2="180.4" stroke="#000" stroke-width="1" />
<text x="424.25000000000006" y="187.1" font-size="7.2" fill="#000" text-anchor="middle" >0</text>
<line x1="466.525" y1="177.1" x2="466.525" y2="180.4" stroke="#000" stroke-width="1" />
<text x="465.925" y="187.1" font-size="7.2" fill="#000" text-anchor="middle" >0,1</text>
<line x1="508.2" y1="177.1" x2="508.2" y2="180.4" stroke="#000" stroke-width="1" />
<text x="507.6" y="187.1" font-size="7.2" fill="#000" text-anchor="middle" >0,2</text>
<text x="420" y="196" font-size="7.2" fill="#000" text-anchor="middle" >Re</text>
<text x="0" y="0" font-size="8" text-anchor="middle" style="font-family:'Liberation Serif',serif;stroke-width:0.15px" transform="translate(323.2,130.2) rotate(-90)">Im</text>
<g clip-path="url(#clipQ)">
<path d="M424.5,80.5 L427.0,80.9 L431.7,83.2 L435.4,87.0 L438.6,91.7 L439.5,99.4 L438.6,104.7 L437.2,109.5 L433.4,113.3 L429.3,116.0 L422.6,116.0 L416.4,111.0 L415.2,105.8 L415.2,102.9 L416.6,100.0 L418.7,97.1 L419.7,96.2" fill="none" stroke="#F0B830" stroke-width="0.7"/>
<path d="M424.5,78.7 l1.8,1.8 l-1.8,1.8 l-1.8,-1.8z" fill="#F0B830"/>
<path d="M427.0,79.1 l1.8,1.8 l-1.8,1.8 l-1.8,-1.8z" fill="#F0B830"/>
<path d="M431.7,81.4 l1.8,1.8 l-1.8,1.8 l-1.8,-1.8z" fill="#F0B830"/>
<path d="M435.4,85.2 l1.8,1.8 l-1.8,1.8 l-1.8,-1.8z" fill="#F0B830"/>
<path d="M438.6,89.9 l1.8,1.8 l-1.8,1.8 l-1.8,-1.8z" fill="#F0B830"/>
<path d="M439.5,97.6 l1.8,1.8 l-1.8,1.8 l-1.8,-1.8z" fill="#F0B830"/>
<path d="M438.6,102.9 l1.8,1.8 l-1.8,1.8 l-1.8,-1.8z" fill="#F0B830"/>
<path d="M437.2,107.7 l1.8,1.8 l-1.8,1.8 l-1.8,-1.8z" fill="#F0B830"/>
<path d="M433.4,111.5 l1.8,1.8 l-1.8,1.8 l-1.8,-1.8z" fill="#F0B830"/>
<path d="M429.3,114.2 l1.8,1.8 l-1.8,1.8 l-1.8,-1.8z" fill="#F0B830"/>
<path d="M422.6,114.2 l1.8,1.8 l-1.8,1.8 l-1.8,-1.8z" fill="#F0B830"/>
<path d="M416.4,109.2 l1.8,1.8 l-1.8,1.8 l-1.8,-1.8z" fill="#F0B830"/>
<path d="M415.2,104.0 l1.8,1.8 l-1.8,1.8 l-1.8,-1.8z" fill="#F0B830"/>
<path d="M415.2,101.1 l1.8,1.8 l-1.8,1.8 l-1.8,-1.8z" fill="#F0B830"/>
<path d="M416.6,98.2 l1.8,1.8 l-1.8,1.8 l-1.8,-1.8z" fill="#F0B830"/>
<path d="M418.7,95.3 l1.8,1.8 l-1.8,1.8 l-1.8,-1.8z" fill="#F0B830"/>
<path d="M419.7,94.4 l1.8,1.8 l-1.8,1.8 l-1.8,-1.8z" fill="#F0B830"/>
<path d="M424.5,80.5 L428.5,81.0 L432.2,82.0 L436.9,84.7 L442.3,89.8 L445.6,95.1 L448.5,100.2 L450.2,106.4 L450.2,115.3 L448.1,124.9 L443.5,132.9 L437.7,137.7 L426.2,141.0 L415.0,134.7 L412.0,127.0 L411.6,122.6 L413.1,118.6 L414.8,116.2 L416.0,114.2" fill="none" stroke="#40B8F0" stroke-width="0.7"/>
<path d="M424.5,78.7 l1.8,1.8 l-1.8,1.8 l-1.8,-1.8z" fill="#40B8F0"/>
<path d="M428.5,79.2 l1.8,1.8 l-1.8,1.8 l-1.8,-1.8z" fill="#40B8F0"/>
<path d="M432.2,80.2 l1.8,1.8 l-1.8,1.8 l-1.8,-1.8z" fill="#40B8F0"/>
<path d="M436.9,82.9 l1.8,1.8 l-1.8,1.8 l-1.8,-1.8z" fill="#40B8F0"/>
<path d="M442.3,88.0 l1.8,1.8 l-1.8,1.8 l-1.8,-1.8z" fill="#40B8F0"/>
<path d="M445.6,93.3 l1.8,1.8 l-1.8,1.8 l-1.8,-1.8z" fill="#40B8F0"/>
<path d="M448.5,98.4 l1.8,1.8 l-1.8,1.8 l-1.8,-1.8z" fill="#40B8F0"/>
<path d="M450.2,104.6 l1.8,1.8 l-1.8,1.8 l-1.8,-1.8z" fill="#40B8F0"/>
<path d="M450.2,113.5 l1.8,1.8 l-1.8,1.8 l-1.8,-1.8z" fill="#40B8F0"/>
<path d="M448.1,123.1 l1.8,1.8 l-1.8,1.8 l-1.8,-1.8z" fill="#40B8F0"/>
<path d="M443.5,131.1 l1.8,1.8 l-1.8,1.8 l-1.8,-1.8z" fill="#40B8F0"/>
<path d="M437.7,135.9 l1.8,1.8 l-1.8,1.8 l-1.8,-1.8z" fill="#40B8F0"/>
<path d="M426.2,139.2 l1.8,1.8 l-1.8,1.8 l-1.8,-1.8z" fill="#40B8F0"/>
<path d="M415.0,132.9 l1.8,1.8 l-1.8,1.8 l-1.8,-1.8z" fill="#40B8F0"/>
<path d="M412.0,125.2 l1.8,1.8 l-1.8,1.8 l-1.8,-1.8z" fill="#40B8F0"/>
<path d="M411.6,120.8 l1.8,1.8 l-1.8,1.8 l-1.8,-1.8z" fill="#40B8F0"/>
<path d="M413.1,116.8 l1.8,1.8 l-1.8,1.8 l-1.8,-1.8z" fill="#40B8F0"/>
<path d="M414.8,114.4 l1.8,1.8 l-1.8,1.8 l-1.8,-1.8z" fill="#40B8F0"/>
<path d="M416.0,112.4 l1.8,1.8 l-1.8,1.8 l-1.8,-1.8z" fill="#40B8F0"/>
<path d="M424.5,80.5 L429.0,81.2 L434.0,82.6 L439.5,85.2 L444.4,88.7 L448.5,92.5 L453.4,98.6 L457.7,105.6 L460.9,113.7 L462.4,125.5 L461.3,139.3 L455.6,152.0 L438.9,168.3 L417.4,162.5 L411.6,153.2 L411.6,147.4 L412.7,142.8 L414.0,140.5 L415.2,139.1" fill="none" stroke="#FFFFFF" stroke-width="0.7"/>
<circle cx="424.5" cy="80.5" r="1.4" fill="#FFFFFF"/>
<circle cx="429.0" cy="81.2" r="1.4" fill="#FFFFFF"/>
<circle cx="434.0" cy="82.6" r="1.4" fill="#FFFFFF"/>
<circle cx="439.5" cy="85.2" r="1.4" fill="#FFFFFF"/>
<circle cx="444.4" cy="88.7" r="1.4" fill="#FFFFFF"/>
<circle cx="448.5" cy="92.5" r="1.4" fill="#FFFFFF"/>
<circle cx="453.4" cy="98.6" r="1.4" fill="#FFFFFF"/>
<circle cx="457.7" cy="105.6" r="1.4" fill="#FFFFFF"/>
<circle cx="460.9" cy="113.7" r="1.4" fill="#FFFFFF"/>
<circle cx="462.4" cy="125.5" r="1.4" fill="#FFFFFF"/>
<circle cx="461.3" cy="139.3" r="1.4" fill="#FFFFFF"/>
<circle cx="455.6" cy="152.0" r="1.4" fill="#FFFFFF"/>
<circle cx="438.9" cy="168.3" r="1.4" fill="#FFFFFF"/>
<circle cx="417.4" cy="162.5" r="1.4" fill="#FFFFFF"/>
<circle cx="411.6" cy="153.2" r="1.4" fill="#FFFFFF"/>
<circle cx="411.6" cy="147.4" r="1.4" fill="#FFFFFF"/>
<circle cx="412.7" cy="142.8" r="1.4" fill="#FFFFFF"/>
<circle cx="414.0" cy="140.5" r="1.4" fill="#FFFFFF"/>
<circle cx="415.2" cy="139.1" r="1.4" fill="#FFFFFF"/>
</g>
<rect x="513" y="80.5" width="71.5" height="38.099999999999994" fill="#C6C6C6" />
<line x1="513" y1="81.0" x2="584.5" y2="81.0" stroke="#DADADA" stroke-width="1" />
<line x1="513.5" y1="80.5" x2="513.5" y2="118.6" stroke="#D5D5D5" stroke-width="1" />
<rect x="575" y="80.5" width="9.5" height="38.099999999999994" fill="url(#lsh)"/>
<line x1="513" y1="118.1" x2="584.5" y2="118.1" stroke="#9A9A9A" stroke-width="1" />
<rect x="558" y="82.0" width="17" height="35.099999999999994" fill="#000" />
<clipPath id="lg2"><rect x="558" y="82.0" width="17" height="35.099999999999994"/></clipPath>
<text x="520" y="88.8" font-size="7.2" fill="#000" text-anchor="start" textLength="32" lengthAdjust="spacingAndGlyphs" >h = 0.5 мм</text>
<g clip-path="url(#lg2)"><path d="M559.8,88.4 L565.4,83.9 L571.3,88.5 L576.5,84.0" fill="none" stroke="#FFFFFF" stroke-width="0.8"/>
<circle cx="559.8" cy="88.4" r="1.45" fill="#FFFFFF"/>
<circle cx="565.4" cy="83.9" r="1.45" fill="#FFFFFF"/>
<circle cx="571.3" cy="88.5" r="1.45" fill="#FFFFFF"/>
<circle cx="576.5" cy="84.0" r="1.45" fill="#FFFFFF"/>
</g>
<text x="520" y="101.8" font-size="7.2" fill="#000" text-anchor="start" textLength="32" lengthAdjust="spacingAndGlyphs" >h = 2.0 мм</text>
<g clip-path="url(#lg2)"><path d="M559.8,101.5 L564.6,97.0 L569.6,101.5 L574.2,97.0" fill="none" stroke="#40B8F0" stroke-width="0.8"/>
<circle cx="559.8" cy="101.5" r="1.45" fill="#40B8F0"/>
<circle cx="564.6" cy="97.0" r="1.45" fill="#40B8F0"/>
<circle cx="569.6" cy="101.5" r="1.45" fill="#40B8F0"/>
<circle cx="574.2" cy="97.0" r="1.45" fill="#40B8F0"/>
</g>
<text x="520" y="114.8" font-size="7.2" fill="#000" text-anchor="start" textLength="32" lengthAdjust="spacingAndGlyphs" >h = 3.5 мм</text>
<g clip-path="url(#lg2)"><path d="M559.8,114.5 L564.6,110.0 L569.6,114.5 L574.2,110.0" fill="none" stroke="#F0B030" stroke-width="0.8"/>
<circle cx="559.8" cy="114.5" r="1.45" fill="#F0B030"/>
<circle cx="564.6" cy="110.0" r="1.45" fill="#F0B030"/>
<circle cx="569.6" cy="114.5" r="1.45" fill="#F0B030"/>
<circle cx="574.2" cy="110.0" r="1.45" fill="#F0B030"/>
</g>
<rect x="314" y="247" width="280" height="179" fill="#C0C0C0" />
<rect x="314" y="247" width="6.5" height="179" fill="#D3D3D3" />
<line x1="314" y1="247.5" x2="594" y2="247.5" stroke="#D8D8D8" stroke-width="1" />
<rect x="587" y="247" width="7" height="179" fill="url(#rsh)"/>
<line x1="593.5" y1="247" x2="593.5" y2="426" stroke="#5A5A5A" stroke-width="1" />
<line x1="314" y1="425" x2="594" y2="425" stroke="#9C9C9C" stroke-width="1.6" />
<text x="345.4" y="236.9" font-size="6.9" fill="#000" text-anchor="start" textLength="215.4" lengthAdjust="spacingAndGlyphs" >Годографы относительной чувствительности к изменениям зазора в</text>
<text x="375.4" y="244.9" font-size="6.9" fill="#000" text-anchor="start" textLength="155.9" lengthAdjust="spacingAndGlyphs" >зависимости от значения обобщенного параметра</text>
<rect x="341.1" y="252.9" width="166.89999999999998" height="148.79999999999998" fill="#000" />
<line x1="508.5" y1="252.9" x2="508.5" y2="402.7" stroke="#DCDCDC" stroke-width="1" />
<line x1="341.1" y1="402.2" x2="509" y2="402.2" stroke="#DCDCDC" stroke-width="1" />
<line x1="340.6" y1="252.9" x2="340.6" y2="401.7" stroke="#A8A8A8" stroke-width="1" />
<line x1="397.6" y1="252.9" x2="397.6" y2="401.7" stroke="#484757" stroke-width="1.25" />
<line x1="452.5" y1="252.9" x2="452.5" y2="401.7" stroke="#484757" stroke-width="1.25" />
<line x1="341.1" y1="274.15714285714284" x2="508" y2="274.15714285714284" stroke="#484757" stroke-width="1.25" />
<line x1="341.1" y1="295.4142857142857" x2="508" y2="295.4142857142857" stroke="#484757" stroke-width="1.25" />
<line x1="341.1" y1="316.6714285714286" x2="508" y2="316.6714285714286" stroke="#484757" stroke-width="1.25" />
<line x1="341.1" y1="337.92857142857144" x2="508" y2="337.92857142857144" stroke="#484757" stroke-width="1.25" />
<line x1="341.1" y1="359.18571428571425" x2="508" y2="359.18571428571425" stroke="#484757" stroke-width="1.25" />
<line x1="341.1" y1="380.4428571428571" x2="508" y2="380.4428571428571" stroke="#484757" stroke-width="1.25" />
<line x1="337.5" y1="252.9" x2="340.5" y2="252.9" stroke="#000" stroke-width="0.9" />
<text x="335.8" y="255.6" font-size="7.2" fill="#000" text-anchor="end" >0,7</text>
<line x1="337.5" y1="274.15714285714284" x2="340.5" y2="274.15714285714284" stroke="#000" stroke-width="0.9" />
<text x="335.8" y="276.85714285714283" font-size="7.2" fill="#000" text-anchor="end" >0,6</text>
<line x1="337.5" y1="295.4142857142857" x2="340.5" y2="295.4142857142857" stroke="#000" stroke-width="0.9" />
<text x="335.8" y="298.1142857142857" font-size="7.2" fill="#000" text-anchor="end" >0,5</text>
<line x1="337.5" y1="316.6714285714286" x2="340.5" y2="316.6714285714286" stroke="#000" stroke-width="0.9" />
<text x="335.8" y="319.37142857142857" font-size="7.2" fill="#000" text-anchor="end" >0,4</text>
<line x1="337.5" y1="337.92857142857144" x2="340.5" y2="337.92857142857144" stroke="#000" stroke-width="0.9" />
<text x="335.8" y="340.62857142857143" font-size="7.2" fill="#000" text-anchor="end" >0,3</text>
<line x1="337.5" y1="359.18571428571425" x2="340.5" y2="359.18571428571425" stroke="#000" stroke-width="0.9" />
<text x="335.8" y="361.88571428571424" font-size="7.2" fill="#000" text-anchor="end" >0,2</text>
<line x1="337.5" y1="380.4428571428571" x2="340.5" y2="380.4428571428571" stroke="#000" stroke-width="0.9" />
<text x="335.8" y="383.1428571428571" font-size="7.2" fill="#000" text-anchor="end" >0,1</text>
<line x1="337.5" y1="401.7" x2="340.5" y2="401.7" stroke="#000" stroke-width="0.9" />
<text x="335.8" y="404.4" font-size="7.2" fill="#000" text-anchor="end" >0,0</text>
<line x1="341.5" y1="402.9" x2="341.5" y2="406.2" stroke="#000" stroke-width="1" />
<text x="340.90000000000003" y="412.7" font-size="7.2" fill="#000" text-anchor="middle" >-0,2</text>
<line x1="398.0" y1="402.9" x2="398.0" y2="406.2" stroke="#000" stroke-width="1" />
<text x="397.40000000000003" y="412.7" font-size="7.2" fill="#000" text-anchor="middle" >-0,1</text>
<line x1="452.9" y1="402.9" x2="452.9" y2="406.2" stroke="#000" stroke-width="1" />
<text x="452.3" y="412.7" font-size="7.2" fill="#000" text-anchor="middle" >0</text>
<line x1="508.4" y1="402.9" x2="508.4" y2="406.2" stroke="#000" stroke-width="1" />
<text x="507.8" y="412.7" font-size="7.2" fill="#000" text-anchor="middle" >0,1</text>
<text x="420" y="421" font-size="7.2" fill="#000" text-anchor="middle" >Re</text>
<text x="0" y="0" font-size="8" text-anchor="middle" style="font-family:'Liberation Serif',serif;stroke-width:0.15px" transform="translate(323.2,328) rotate(-90)">Im</text>
<g clip-path="url(#clipB)">
<path d="M458.9,397.5 L460.5,395.5 L462.5,393.0 L465.0,391.0 L469.0,388.2 L468.4,374.8 L460.5,362.1 L446.1,383.8 L439.1,384.4 L427.4,381.8 L429.2,388.2 L420.6,388.2 L439.1,397.1 L431.0,399.0 L428.0,400.5 L425.0,401.5" fill="none" stroke="#F0B030" stroke-width="0.7"/>
<path d="M458.9,395.5 l2.0,2.0 l-2.0,2.0 l-2.0,-2.0z" fill="#F0B030"/>
<path d="M460.5,393.5 l2.0,2.0 l-2.0,2.0 l-2.0,-2.0z" fill="#F0B030"/>
<path d="M462.5,391.0 l2.0,2.0 l-2.0,2.0 l-2.0,-2.0z" fill="#F0B030"/>
<path d="M465.0,389.0 l2.0,2.0 l-2.0,2.0 l-2.0,-2.0z" fill="#F0B030"/>
<path d="M469.0,386.2 l2.0,2.0 l-2.0,2.0 l-2.0,-2.0z" fill="#F0B030"/>
<path d="M468.4,372.8 l2.0,2.0 l-2.0,2.0 l-2.0,-2.0z" fill="#F0B030"/>
<path d="M460.5,360.1 l2.0,2.0 l-2.0,2.0 l-2.0,-2.0z" fill="#F0B030"/>
<path d="M446.1,381.8 l2.0,2.0 l-2.0,2.0 l-2.0,-2.0z" fill="#F0B030"/>
<path d="M439.1,382.4 l2.0,2.0 l-2.0,2.0 l-2.0,-2.0z" fill="#F0B030"/>
<path d="M427.4,379.8 l2.0,2.0 l-2.0,2.0 l-2.0,-2.0z" fill="#F0B030"/>
<path d="M429.2,386.2 l2.0,2.0 l-2.0,2.0 l-2.0,-2.0z" fill="#F0B030"/>
<path d="M420.6,386.2 l2.0,2.0 l-2.0,2.0 l-2.0,-2.0z" fill="#F0B030"/>
<path d="M439.1,395.1 l2.0,2.0 l-2.0,2.0 l-2.0,-2.0z" fill="#F0B030"/>
<path d="M431.0,397.0 l2.0,2.0 l-2.0,2.0 l-2.0,-2.0z" fill="#F0B030"/>
<path d="M428.0,398.5 l2.0,2.0 l-2.0,2.0 l-2.0,-2.0z" fill="#F0B030"/>
<path d="M425.0,399.5 l2.0,2.0 l-2.0,2.0 l-2.0,-2.0z" fill="#F0B030"/>
<path d="M459.5,396.5 L461.5,393.0 L463.5,390.0 L465.5,387.5 L467.5,385.0 L470.0,381.5 L472.0,379.0 L474.1,376.1 L473.5,360.8 L447.7,334.4 L433.5,373.4 L423.3,374.7 L404.5,372.1 L411.5,382.8 L399.5,382.8 L445.0,399.0 L405.3,390.9 L419.8,400.2 L422.0,399.0 L424.5,398.0 L426.8,396.7 L430.0,397.0" fill="none" stroke="#40A8D8" stroke-width="0.7"/>
<path d="M459.5,394.5 l2.0,2.0 l-2.0,2.0 l-2.0,-2.0z" fill="#40A8D8"/>
<path d="M461.5,391.0 l2.0,2.0 l-2.0,2.0 l-2.0,-2.0z" fill="#40A8D8"/>
<path d="M463.5,388.0 l2.0,2.0 l-2.0,2.0 l-2.0,-2.0z" fill="#40A8D8"/>
<path d="M465.5,385.5 l2.0,2.0 l-2.0,2.0 l-2.0,-2.0z" fill="#40A8D8"/>
<path d="M467.5,383.0 l2.0,2.0 l-2.0,2.0 l-2.0,-2.0z" fill="#40A8D8"/>
<path d="M470.0,379.5 l2.0,2.0 l-2.0,2.0 l-2.0,-2.0z" fill="#40A8D8"/>
<path d="M472.0,377.0 l2.0,2.0 l-2.0,2.0 l-2.0,-2.0z" fill="#40A8D8"/>
<path d="M474.1,374.1 l2.0,2.0 l-2.0,2.0 l-2.0,-2.0z" fill="#40A8D8"/>
<path d="M473.5,358.8 l2.0,2.0 l-2.0,2.0 l-2.0,-2.0z" fill="#40A8D8"/>
<path d="M447.7,332.4 l2.0,2.0 l-2.0,2.0 l-2.0,-2.0z" fill="#40A8D8"/>
<path d="M433.5,371.4 l2.0,2.0 l-2.0,2.0 l-2.0,-2.0z" fill="#40A8D8"/>
<path d="M423.3,372.7 l2.0,2.0 l-2.0,2.0 l-2.0,-2.0z" fill="#40A8D8"/>
<path d="M404.5,370.1 l2.0,2.0 l-2.0,2.0 l-2.0,-2.0z" fill="#40A8D8"/>
<path d="M411.5,380.8 l2.0,2.0 l-2.0,2.0 l-2.0,-2.0z" fill="#40A8D8"/>
<path d="M399.5,380.8 l2.0,2.0 l-2.0,2.0 l-2.0,-2.0z" fill="#40A8D8"/>
<path d="M445.0,397.0 l2.0,2.0 l-2.0,2.0 l-2.0,-2.0z" fill="#40A8D8"/>
<path d="M405.3,388.9 l2.0,2.0 l-2.0,2.0 l-2.0,-2.0z" fill="#40A8D8"/>
<path d="M419.8,398.2 l2.0,2.0 l-2.0,2.0 l-2.0,-2.0z" fill="#40A8D8"/>
<path d="M422.0,397.0 l2.0,2.0 l-2.0,2.0 l-2.0,-2.0z" fill="#40A8D8"/>
<path d="M424.5,396.0 l2.0,2.0 l-2.0,2.0 l-2.0,-2.0z" fill="#40A8D8"/>
<path d="M426.8,394.7 l2.0,2.0 l-2.0,2.0 l-2.0,-2.0z" fill="#40A8D8"/>
<path d="M430.0,395.0 l2.0,2.0 l-2.0,2.0 l-2.0,-2.0z" fill="#40A8D8"/>
<path d="M459.0,394.5 L460.5,390.0 L462.0,385.7 L464.6,380.6 L467.8,376.0 L465.2,374.8 L469.7,368.5 L473.5,360.8 L467.5,340.7 L386.0,264.2 L403.6,364.3 L378.3,361.7 L392.0,377.0 L376.0,378.2 L440.0,399.0 L387.1,388.0 L408.8,399.6 L411.0,398.5 L413.0,397.5 L415.0,396.5 L416.9,395.6 L421.0,396.0" fill="none" stroke="#FFFFFF" stroke-width="1.05" stroke-dasharray="2.2,1.5"/>
<circle cx="459.0" cy="394.5" r="1.7" fill="#FFFFFF"/>
<circle cx="460.5" cy="390.0" r="1.7" fill="#FFFFFF"/>
<circle cx="462.0" cy="385.7" r="1.7" fill="#FFFFFF"/>
<circle cx="464.6" cy="380.6" r="1.7" fill="#FFFFFF"/>
<circle cx="467.8" cy="376.0" r="1.7" fill="#FFFFFF"/>
<circle cx="465.2" cy="374.8" r="1.7" fill="#FFFFFF"/>
<circle cx="469.7" cy="368.5" r="1.7" fill="#FFFFFF"/>
<circle cx="473.5" cy="360.8" r="1.7" fill="#FFFFFF"/>
<circle cx="467.5" cy="340.7" r="1.7" fill="#FFFFFF"/>
<circle cx="386.0" cy="264.2" r="1.7" fill="#FFFFFF"/>
<circle cx="403.6" cy="364.3" r="1.7" fill="#FFFFFF"/>
<circle cx="378.3" cy="361.7" r="1.7" fill="#FFFFFF"/>
<circle cx="392.0" cy="377.0" r="1.7" fill="#FFFFFF"/>
<circle cx="376.0" cy="378.2" r="1.7" fill="#FFFFFF"/>
<circle cx="440.0" cy="399.0" r="1.7" fill="#FFFFFF"/>
<circle cx="387.1" cy="388.0" r="1.7" fill="#FFFFFF"/>
<circle cx="408.8" cy="399.6" r="1.7" fill="#FFFFFF"/>
<circle cx="411.0" cy="398.5" r="1.7" fill="#FFFFFF"/>
<circle cx="413.0" cy="397.5" r="1.7" fill="#FFFFFF"/>
<circle cx="415.0" cy="396.5" r="1.7" fill="#FFFFFF"/>
<circle cx="416.9" cy="395.6" r="1.7" fill="#FFFFFF"/>
<circle cx="421.0" cy="396.0" r="1.7" fill="#FFFFFF"/>
</g>
<rect x="514.5" y="254" width="71.5" height="38.69999999999999" fill="#C6C6C6" />
<line x1="514.5" y1="254.5" x2="586" y2="254.5" stroke="#DADADA" stroke-width="1" />
<line x1="515.0" y1="254" x2="515.0" y2="292.7" stroke="#D5D5D5" stroke-width="1" />
<rect x="576" y="254" width="10" height="38.69999999999999" fill="url(#lsh)"/>
<line x1="514.5" y1="292.2" x2="586" y2="292.2" stroke="#9A9A9A" stroke-width="1" />
<rect x="559" y="255.5" width="17" height="35.69999999999999" fill="#000" />
<clipPath id="lg3"><rect x="559" y="255.5" width="17" height="35.69999999999999"/></clipPath>
<text x="521.5" y="262.90000000000003" font-size="7.2" fill="#000" text-anchor="start" textLength="32.0" lengthAdjust="spacingAndGlyphs" >h = 0.5 мм</text>
<g clip-path="url(#lg3)"><path d="M560.8,262.5 L566.4,258.0 L572.3,262.6 L577.5,258.1" fill="none" stroke="#FFFFFF" stroke-width="0.8" stroke-dasharray="1.2,1"/>
<circle cx="560.8" cy="262.5" r="1.45" fill="#FFFFFF"/>
<circle cx="566.4" cy="258.0" r="1.45" fill="#FFFFFF"/>
<circle cx="572.3" cy="262.6" r="1.45" fill="#FFFFFF"/>
<circle cx="577.5" cy="258.1" r="1.45" fill="#FFFFFF"/>
</g>
<text x="521.5" y="275.8" font-size="7.2" fill="#000" text-anchor="start" textLength="32.0" lengthAdjust="spacingAndGlyphs" >h = 2.0 мм</text>
<g clip-path="url(#lg3)"><path d="M560.8,275.5 L565.6,271.0 L570.6,275.5 L575.2,271.0" fill="none" stroke="#40B8F0" stroke-width="0.8"/>
<circle cx="560.8" cy="275.5" r="1.45" fill="#40B8F0"/>
<circle cx="565.6" cy="271.0" r="1.45" fill="#40B8F0"/>
<circle cx="570.6" cy="275.5" r="1.45" fill="#40B8F0"/>
<circle cx="575.2" cy="271.0" r="1.45" fill="#40B8F0"/>
</g>
<text x="521.5" y="288.70000000000005" font-size="7.2" fill="#000" text-anchor="start" textLength="32.0" lengthAdjust="spacingAndGlyphs" >h = 3.5 мм</text>
<g clip-path="url(#lg3)"><path d="M560.8,288.4 L565.6,283.9 L570.6,288.4 L575.2,283.9" fill="none" stroke="#F0B030" stroke-width="0.8"/>
<circle cx="560.8" cy="288.4" r="1.45" fill="#F0B030"/>
<circle cx="565.6" cy="283.9" r="1.45" fill="#F0B030"/>
<circle cx="570.6" cy="288.4" r="1.45" fill="#F0B030"/>
<circle cx="575.2" cy="283.9" r="1.45" fill="#F0B030"/>
</g>
<path d="M248,268.2 v8 l2,-1.9 l2.2,3.3 l1.3,-0.8 l-2.1,-3.2 h2.8 z" fill="#F4F4F4" stroke="#000" stroke-width="1" stroke-linejoin="round"/>
<line x1="0" y1="410.3" x2="54" y2="410.3" stroke="#CFCFCF" stroke-width="1" />
<rect x="7.6" y="411" width="46.6" height="10.5" fill="#B4B4B4" />
<rect x="7.9" y="412.4" width="11.4" height="9" fill="#707070" />
<line x1="11" y1="412.6" x2="11" y2="421.2" stroke="#9C9C9C" stroke-width="0.8" />
<line x1="15.8" y1="412.6" x2="15.8" y2="421.2" stroke="#9C9C9C" stroke-width="0.8" />
<line x1="8" y1="415" x2="19.2" y2="415" stroke="#9C9C9C" stroke-width="0.8" />
<line x1="8" y1="419.2" x2="19.2" y2="419.2" stroke="#9C9C9C" stroke-width="0.8" />
<line x1="9.5" y1="417.2" x2="17.5" y2="417.2" stroke="#000" stroke-width="1.3" />
<line x1="13.4" y1="413.5" x2="13.4" y2="421" stroke="#000" stroke-width="1.3" />
<circle cx="10" cy="415" r="1.1" fill="#30E030"/>
<circle cx="27" cy="416.3" r="2.5" fill="#C8C8F0" stroke="#111" stroke-width="0.9"/>
<line x1="25.5" y1="416.3" x2="28.5" y2="416.3" stroke="#111" stroke-width="0.7" />
<line x1="27" y1="414.8" x2="27" y2="417.8" stroke="#111" stroke-width="0.7" />
<line x1="25.2" y1="418.2" x2="22.3" y2="421" stroke="#000" stroke-width="1.5" />
<path d="M27.6,419.3 h2.4 l-1.2,1.5z" fill="#000"/>
<circle cx="22.5" cy="414.5" r="0.9" fill="#30C030"/>
<path d="M35.8,419 q-0.8,-3.6 1.4,-4.8 q2.2,-1 4,0.6 q1.4,1.6 0.5,4.6 q-1,1.4 -3,1.3 q-2.1,0 -2.9,-1.7z" fill="#A8A8A8" stroke="#333" stroke-width="0.9"/>
<circle cx="35.5" cy="414.5" r="0.9" fill="#30C030"/>
<rect x="45" y="411" width="9.2" height="10.5" fill="url(#rsh)"/>
<rect x="613" y="24.5" width="10" height="397" fill="#FBFAF4" />
<line x1="611.8" y1="27" x2="611.8" y2="421" stroke="#A6A6A6" stroke-width="1.4" />
<rect x="613.9" y="27.2" width="7.9" height="9.5" fill="#C3D3FA" rx="1.2" stroke="#AFC3F2" stroke-width="0.6"/>
<path d="M615.6,32.4 l2.1,-2.4 l2.1,2.4" fill="none" stroke="#2C3D6C" stroke-width="1.5"/>
<rect x="613.9" y="102" width="8" height="221" fill="#C2D2FA" rx="1.2" stroke="#A9BEF0" stroke-width="0.7"/>
<line x1="616" y1="210.5" x2="620" y2="210.5" stroke="#EEF2FE" stroke-width="0.7" />
<line x1="616" y1="212.5" x2="620" y2="212.5" stroke="#EEF2FE" stroke-width="0.7" />
<line x1="616" y1="214.5" x2="620" y2="214.5" stroke="#EEF2FE" stroke-width="0.7" />
<rect x="614.1" y="412.2" width="7.3" height="8.8" fill="#C3D3FA" rx="1.2" stroke="#AFC3F2" stroke-width="0.6"/>
<path d="M615.6,416 l2,2.5 l2,-2.5" fill="none" stroke="#2C3D6C" stroke-width="1.5"/>
<rect x="0" y="421.2" width="613" height="10.8" fill="#FBFAF4" />
<line x1="0" y1="421.8" x2="613" y2="421.8" stroke="#FFFFFF" stroke-width="0.8" />
<rect x="0.2" y="422.6" width="8.6" height="9.2" fill="#C3D3FA" rx="1.2" stroke="#AFC3F2" stroke-width="0.6"/>
<path d="M5.4,424.6 l-2.2,2.3 l2.2,2.3" fill="none" stroke="#2C3D6C" stroke-width="1.5"/>
<rect x="123" y="422.9" width="382.5" height="8.4" fill="#C2D2FA" rx="1.2" stroke="#A9BEF0" stroke-width="0.7"/>
<line x1="312.5" y1="425" x2="312.5" y2="429.5" stroke="#EEF2FE" stroke-width="0.7" />
<line x1="314.5" y1="425" x2="314.5" y2="429.5" stroke="#EEF2FE" stroke-width="0.7" />
<line x1="316.5" y1="425" x2="316.5" y2="429.5" stroke="#EEF2FE" stroke-width="0.7" />
<rect x="603.3" y="422.7" width="8.6" height="9.2" fill="#C3D3FA" rx="1.2" stroke="#AFC3F2" stroke-width="0.6"/>
<path d="M607.6,424.6 l2.2,2.3 l-2.2,2.3" fill="none" stroke="#2C3D6C" stroke-width="1.5"/>
<rect x="613" y="421.2" width="10" height="10.8" fill="#ECE9D8" />
<rect x="620.5" y="424.5" width="1.2" height="1.2" fill="#9C9A8C" />
<rect x="618" y="427" width="1.2" height="1.2" fill="#9C9A8C" />
<rect x="620.5" y="427" width="1.2" height="1.2" fill="#9C9A8C" />
<rect x="615.5" y="429.5" width="1.2" height="1.2" fill="#9C9A8C" />
<rect x="618" y="429.5" width="1.2" height="1.2" fill="#9C9A8C" />
<rect x="620.5" y="429.5" width="1.2" height="1.2" fill="#9C9A8C" />
</svg></body></html>
